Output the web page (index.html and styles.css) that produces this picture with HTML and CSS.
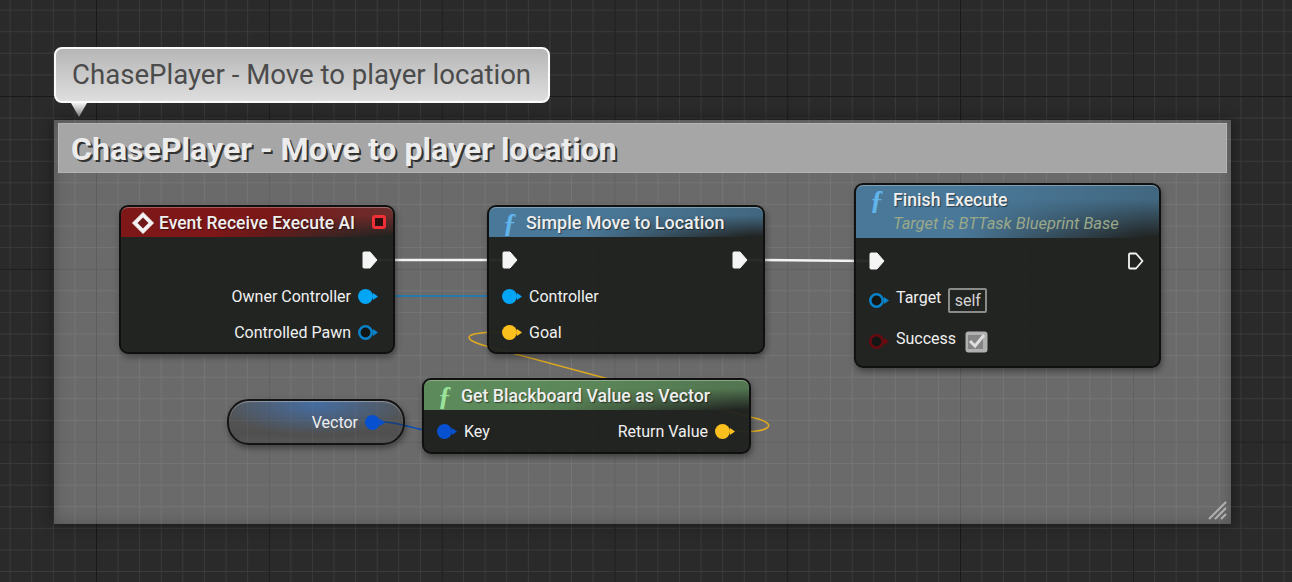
FILE: index.html
```html
<!DOCTYPE html>
<html lang="en">
<head>
  <meta charset="UTF-8" />
  <title>ChasePlayer Blueprint</title>
  <link rel="stylesheet" href="styles.css">
</head>
<body>
  <svg class="defs" width="0" height="0">
    <symbol id="pin-exec" viewBox="0 0 16 18">
      <path d="M2 1H8L15 9L8 17H2A1 1 0 0 1 1 16V2A1 1 0 0 1 2 1Z" fill="currentColor" stroke="currentColor" stroke-linejoin="round"/>
    </symbol>
    <symbol id="pin-exec-open" viewBox="0 0 16 18">
      <path d="M2 1.5H8L14.5 9L8 16.5H2A1 1 0 0 1 1 15.5V2.500A1 1 0 0 1 2 1.500Z" fill="none" stroke="currentColor" stroke-width="1.800" stroke-linejoin="round"/>
    </symbol>
    <symbol id="pin-data" viewBox="0 0 20 15">
      <circle cx="7.500" cy="7.500" r="7.500" fill="currentColor"/>
      <path d="M15 4L20 7.500L15 11Z" fill="currentColor"/>
    </symbol>
    <symbol id="pin-data-open" viewBox="0 0 20 15">
      <circle cx="7.500" cy="7.500" r="6.200" fill="#141616" stroke="currentColor" stroke-width="2.600"/>
      <path d="M15 4L20 7.500L15 11Z" fill="currentColor"/>
    </symbol>
  </svg>

  <div class="graph">
    <div class="bubble">ChasePlayer - Move to player location</div>
    <div class="bubble-tip"></div>

    <section class="comment">
      <h2 class="comment-title">ChasePlayer - Move to player location</h2>
      <svg class="grip" width="20" height="20" viewBox="0 0 20 20">
        <path d="M1 18L18 1M7 18L18 7M13 18L18 13" fill="none" stroke="#b0b0b0" stroke-width="2"/>
      </svg>
    </section>

    <svg class="wires" width="1292" height="582" viewBox="0 0 1292 582">
      <path d="M378 260H502" stroke="#f4f4f4" stroke-width="2.500" fill="none"/>
      <path d="M748 260C790 260 830 261 870 261" stroke="#f4f4f4" stroke-width="2.500" fill="none"/>
      <path d="M376 296H502" stroke="#0b80c4" stroke-width="1.500" fill="none"/>
      <path d="M384 422C405 423 415 431 437 431" stroke="#0a50b8" stroke-width="1.500" fill="none"/>
      <path d="M733 431C772 434 781 423 750 417L486 346C455 337 470 332 502 332" stroke="#e0aa20" stroke-width="1.500" fill="none"/>
    </svg>

    <article class="node node-event">
      <header class="node-head head-red">
        <svg class="event-icon" width="22" height="22" viewBox="0 0 22 22">
          <path d="M11 0.500L21.500 11L11 21.500L0.500 11Z" fill="#f2f2f2" stroke="#f2f2f2" stroke-linejoin="round"/>
          <path d="M11 5.500L16.500 11L11 16.500L5.500 11Z" fill="#6e1a1a"/>
        </svg>
        <span class="node-title title-event">Event Receive Execute AI</span>
        <span class="delegate"></span>
      </header>
      <div class="pin-row out"><svg class="pin exec white"><use href="#pin-exec"/></svg></div>
      <div class="pin-row out"><span>Owner Controller</span><svg class="pin data blue"><use href="#pin-data"/></svg></div>
      <div class="pin-row out"><span>Controlled Pawn</span><svg class="pin data blue-dim"><use href="#pin-data-open"/></svg></div>
    </article>

    <article class="node node-move">
      <header class="node-head head-blue">
        <span class="fn-icon">ƒ</span>
        <span class="node-title title-move">Simple Move to Location</span>
      </header>
      <div class="pin-row split">
        <svg class="pin exec white"><use href="#pin-exec"/></svg>
        <svg class="pin exec white"><use href="#pin-exec"/></svg>
      </div>
      <div class="pin-row"><svg class="pin data blue"><use href="#pin-data"/></svg><span>Controller</span></div>
      <div class="pin-row"><svg class="pin data gold"><use href="#pin-data"/></svg><span>Goal</span></div>
    </article>

    <article class="node node-finish">
      <header class="node-head head-blue head-tall">
        <span class="fn-icon">ƒ</span>
        <div class="title-stack">
          <span class="node-title">Finish Execute</span>
          <span class="node-sub">Target is BTTask Blueprint Base</span>
        </div>
      </header>
      <div class="pin-row split">
        <svg class="pin exec white"><use href="#pin-exec"/></svg>
        <svg class="pin exec white"><use href="#pin-exec-open"/></svg>
      </div>
      <div class="pin-row row-target">
        <svg class="pin data blue-dim"><use href="#pin-data-open"/></svg>
        <span class="raised">Target</span>
        <span class="self-box">self</span>
      </div>
      <div class="pin-row row-success">
        <svg class="pin data maroon"><use href="#pin-data-open"/></svg>
        <span class="raised">Success</span>
        <svg class="check" width="23" height="22" viewBox="0 0 23 22">
          <rect x="0.500" y="0.500" width="22" height="21" rx="3" fill="#b0b0b0"/>
          <rect x="3" y="4" width="15" height="14" fill="#858585"/>
          <path d="M5 10L10 15L19 4" fill="none" stroke="#dedede" stroke-width="3"/>
        </svg>
      </div>
    </article>

    <article class="var-node">
      <span>Vector</span>
      <svg class="pin data royal"><use href="#pin-data"/></svg>
    </article>

    <article class="node node-blackboard">
      <header class="node-head head-green">
        <span class="fn-icon fn-green">ƒ</span>
        <span class="node-title">Get Blackboard Value as Vector</span>
      </header>
      <div class="pin-row split row-key">
        <div class="pin-side"><svg class="pin data royal"><use href="#pin-data"/></svg><span>Key</span></div>
        <div class="pin-side"><span>Return Value</span><svg class="pin data gold"><use href="#pin-data"/></svg></div>
      </div>
    </article>
  </div>
</body>
</html>
```

FILE: styles.css
```css
* {
  margin: 0;
  padding: 0;
  box-sizing: border-box;
}

html,
body {
  width: 1292px;
  height: 582px;
  overflow: hidden;
}

body {
  font-family: 'Roboto', sans-serif;
  background-color: #2a2a2a;
}

.defs {
  position: absolute;
}

.graph {
  position: relative;
  width: 1292px;
  height: 582px;
  background-color: #2a2a2a;
  background-image:
    linear-gradient(to right, #191919 1px, transparent 1px),
    linear-gradient(to bottom, #191919 1px, transparent 1px),
    linear-gradient(to right, #3a3a3a 1px, transparent 1px),
    linear-gradient(to bottom, #3a3a3a 1px, transparent 1px);
  background-size: 172.8px 172.8px, 172.8px 172.8px, 21.6px 21.6px, 21.6px 21.6px;
  background-position: 96px 96px, 96px 96px, 9.6px 9.6px, 9.6px 9.6px;
}

/* comment bubble */
.bubble {
  position: absolute;
  left: 54px;
  top: 47px;
  width: 496px;
  height: 56px;
  padding: 0 0 2px 16px;
  display: flex;
  align-items: center;
  font-size: 27.6px;
  color: #4b4b4b;
  white-space: nowrap;
  background: linear-gradient(#b6b6b6, #dedede);
  border: 2px solid #fafafa;
  border-radius: 8px;
}

.bubble-tip {
  position: absolute;
  left: 71px;
  top: 103px;
  width: 16px;
  height: 14px;
  background: linear-gradient(#f2f2f2, #8a8a8a);
  clip-path: polygon(0 0, 100% 0, 50% 100%);
}

/* comment box */
.comment {
  position: absolute;
  left: 54px;
  top: 120px;
  width: 1177px;
  height: 404px;
  padding: 3px 4px;
  background: rgba(255, 255, 255, 0.3);
  box-shadow: 0 0 12px rgba(0, 0, 0, 0.45), inset 0 0 14px rgba(0, 0, 0, 0.22);
}

.comment-title {
  height: 50px;
  padding-left: 12px;
  font-size: 32.1px;
  font-weight: 700;
  line-height: 50px;
  color: #ececec;
  background: #a6a6a6;
  border: 1px solid #b4b4b4;
  text-shadow: 2px 2px 0 #333;
  white-space: nowrap;
}

.grip {
  position: absolute;
  right: 3px;
  bottom: 3px;
}

.wires {
  position: absolute;
  left: 0;
  top: 0;
}

/* nodes */
.node {
  position: absolute;
  display: flex;
  flex-direction: column;
  color: #f0f0f0;
  font-size: 16px;
  background: rgba(31, 33, 31, 0.95);
  border: 2px solid #101010;
  border-radius: 9px;
  box-shadow: 1px 3px 6px rgba(0, 0, 0, 0.4);
}

.node-event {
  left: 119px;
  top: 205px;
  width: 276px;
  height: 149px;
}

.node-move {
  left: 487px;
  top: 205px;
  width: 278px;
  height: 149px;
}

.node-finish {
  left: 854px;
  top: 183px;
  width: 307px;
  height: 185px;
}

.node-blackboard {
  left: 422px;
  top: 378px;
  width: 329px;
  height: 76px;
}

.node-head {
  position: relative;
  display: flex;
  align-items: center;
  gap: 6px;
  height: 30px;
  margin-bottom: 5px;
  padding-left: 14px;
  border-radius: 7px 7px 0 0;
  border-top: 1px solid rgba(255, 255, 255, 0.3);
  flex-shrink: 0;
}

/* fades the right half of the header down into the node body */
.node-head::after {
  content: "";
  position: absolute;
  inset: 0;
  border-radius: inherit;
  background: linear-gradient(to bottom, rgba(33, 35, 33, 0.1) 25%, #212321 100%);
  -webkit-mask-image: linear-gradient(to right, transparent 35%, black 95%);
  mask-image: linear-gradient(to right, transparent 35%, black 95%);
}

.node-head > * {
  position: relative;
  z-index: 1;
}

.head-red {
  padding-left: 11px;
  gap: 5px;
  background: linear-gradient(to right, #7e1818 0%, #7e1818 55%, #75302f 100%);
}

.head-blue {
  background: linear-gradient(to right, #4a7898 0%, #4a7898 50%, #46708c 100%);
}

.head-green {
  background: linear-gradient(to right, #5d8a5a 0%, #5d8a5a 50%, #587f56 100%);
}

.head-tall {
  height: 53px;
  align-items: flex-start;
}

.node-title {
  font-size: 17.7px;
  font-weight: 500;
  color: #efefef;
  text-shadow: 1px 1px 1px rgba(0, 0, 0, 0.5);
  white-space: nowrap;
}

.title-event {
  font-size: 17.5px;
}

.title-move {
  font-size: 17.95px;
}

.title-stack {
  display: flex;
  flex-direction: column;
  gap: 4px;
  padding-top: 4px;
}

.node-sub {
  font-size: 16.5px;
  font-style: italic;
  color: #9aa88a;
  white-space: nowrap;
}

.fn-icon {
  width: 17px;
  font-family: 'Liberation Serif', serif;
  font-size: 27px;
  font-style: italic;
  font-weight: 700;
  line-height: 28px;
  color: #62b4ec;
  flex-shrink: 0;
}

.fn-green {
  color: #9be29b;
}

.event-icon {
  flex-shrink: 0;
}

.node-head > .delegate {
  position: absolute;
  right: 7px;
  top: 7px;
  width: 14px;
  height: 14px;
  background: #2a1010;
  border: 3px solid #f03036;
  border-radius: 3px;
}

/* pin rows */
.pin-row {
  display: flex;
  align-items: center;
  gap: 7px;
  height: 36px;
  padding: 0 15px 0 13px;
  white-space: nowrap;
  flex-shrink: 0;
}

.pin-row.out {
  justify-content: flex-end;
}

.pin-row.split {
  justify-content: space-between;
}

.pin-side {
  display: flex;
  align-items: center;
  gap: 7px;
}

.pin {
  flex-shrink: 0;
}

.pin.exec {
  width: 16px;
  height: 18px;
}

.pin.data {
  width: 20px;
  height: 15px;
}

.white { color: #f5f5f5; }
.blue { color: #04a5f5; }
.blue-dim { color: #0a82c8; }
.gold { color: #fbbf1e; }
.royal { color: #0750d0; }
.maroon { color: #6a0a10; }

.row-target {
  height: 42px;
}

.row-success {
  height: 41px;
}

.raised {
  position: relative;
  top: -3px;
}

.self-box {
  width: 39px;
  height: 25px;
  font-size: 16px;
  line-height: 21px;
  text-align: center;
  color: #d4d4d4;
  border: 2px solid #8b8b8b;
  border-radius: 2px;
}

.check {
  margin-left: 2px;
}

.row-key {
  height: 32px;
  padding-right: 14px;
}

/* variable getter */
.var-node {
  position: absolute;
  left: 227px;
  top: 399px;
  width: 178px;
  height: 46px;
  padding-right: 18px;
  display: flex;
  align-items: center;
  justify-content: flex-end;
  gap: 7px;
  font-size: 16px;
  color: #f0f0f0;
  background:
    radial-gradient(ellipse 55% 70% at 50% 10%, rgba(60, 120, 200, 0.65), transparent 100%),
    linear-gradient(rgba(40, 40, 40, 0.3), rgba(30, 30, 30, 0.35) 80%, rgba(40, 40, 40, 0.3));
  border: 2px solid #141414;
  border-radius: 22px;
  box-shadow: 1px 3px 6px rgba(0, 0, 0, 0.4), inset 0 1px 1px rgba(255, 255, 255, 0.35);
}
```
